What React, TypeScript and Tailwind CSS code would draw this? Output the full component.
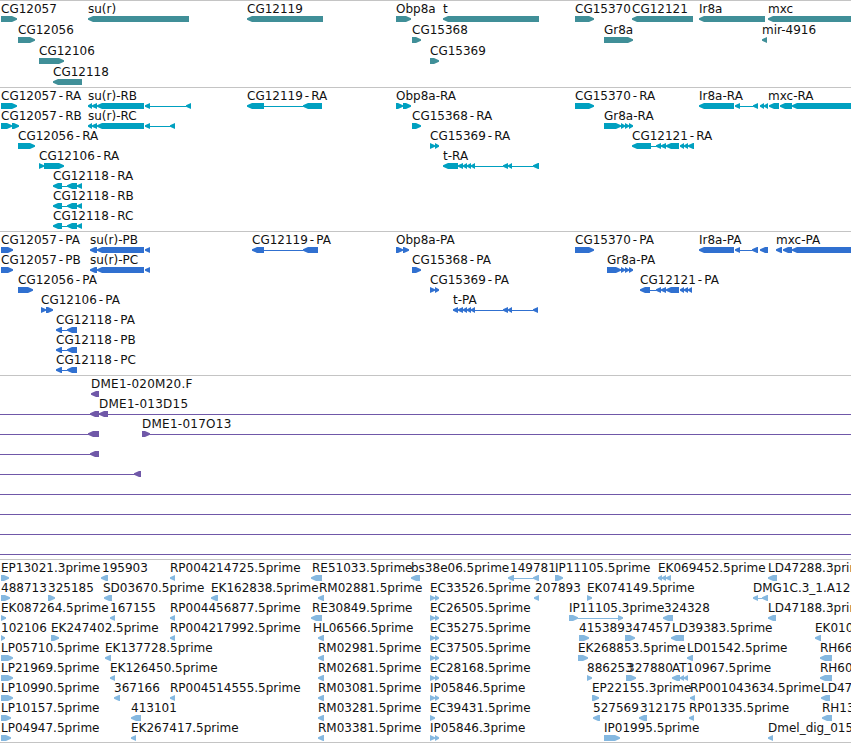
type Seg = [number, number, 'l' | 'r' | '-'];
type Item = { label?: string; x?: number; row: number; segs: Seg[] };

const L = (a: number, b: number): Seg => [a, b, 'l'];
const R = (a: number, b: number): Seg => [a, b, 'r'];
const N = (a: number, b: number): Seg => [a, b, '-'];

// one row of the 5th track has a lot of short labels, so items are kept terse
const it = (label: string, x: number, row: number, ...segs: Seg[]): Item => ({ label, x, row, segs });

const genes: Item[] = [
  it('CG12057', 1, 0, R(1, 17)),
  it('su(r)', 88, 0, L(88, 189)),
  it('CG12119', 247, 0, L(247, 323)),
  it('Obp8a', 396, 0, R(396, 411)),
  it('t', 443, 0, L(443, 539)),
  it('CG15370', 575, 0, R(575, 594)),
  it('CG12121', 632, 0, L(632, 693)),
  it('Ir8a', 699, 0, L(699, 765)),
  it('mxc', 768, 0, L(768, 860)),
  it('CG12056', 18, 1, R(18, 35)),
  it('CG15368', 412, 1, R(412, 421)),
  it('Gr8a', 604, 1, R(604, 633)),
  it('mir-4916', 762, 1, L(762, 767)),
  it('CG12106', 39, 2, R(39, 64)),
  it('CG15369', 430, 2, R(430, 439)),
  it('CG12118', 53, 3, L(53, 82)),
];

const cg12118ra = [L(53, 62), N(62, 67), L(67, 77), L(77, 82)];
const surExons = [L(88, 92), L(92, 97), L(97, 144), L(145, 150)];

const rnaA: Item[] = [
  it('CG12057-RA', 1, 0, R(1, 17)),
  it('su(r)-RB', 88, 0, ...surExons, N(150, 186), L(186, 191)),
  it('CG12119-RA', 247, 0, L(247, 264), N(264, 303), L(303, 322)),
  it('Obp8a-RA', 396, 0, R(396, 403), R(403, 411)),
  it('CG15370-RA', 575, 0, R(575, 594)),
  it('Ir8a-RA', 699, 0, L(699, 734), L(735, 740), N(740, 753), L(753, 758), L(760, 764), L(764, 768)),
  it('mxc-RA', 768, 0, L(769, 779), L(780, 792), L(792, 860)),
  it('CG12057-RB', 1, 1, R(1, 12), R(12, 19)),
  it('su(r)-RC', 88, 1, ...surExons, N(150, 170), L(170, 175)),
  it('CG15368-RA', 412, 1, R(412, 421)),
  it('Gr8a-RA', 604, 1, R(604, 621), R(621, 625), R(625, 629), R(629, 633)),
  it('CG12056-RA', 18, 2, R(18, 35)),
  it('CG15369-RA', 430, 2, R(430, 435), R(435, 439)),
  it('CG12121-RA', 632, 2, L(632, 651), N(651, 656), L(656, 661), L(661, 666), L(666, 679), L(680, 684), L(684, 688), L(688, 694)),
  it('CG12106-RA', 39, 3, R(39, 44), R(44, 64)),
  it('t-RA', 443, 3, L(443, 458), L(458, 463), L(463, 467), L(467, 471), L(471, 475), N(475, 503), L(503, 508), L(508, 512), N(512, 533), L(533, 539)),
  it('CG12118-RA', 53, 4, ...cg12118ra),
  it('CG12118-RB', 53, 5, ...cg12118ra),
  it('CG12118-RC', 53, 6, ...cg12118ra),
];

const cg12118pa = [L(56, 62), N(62, 67), L(67, 77)];
const surPb = [L(90, 97), L(97, 144), L(145, 150)];

const rnaB: Item[] = [
  it('CG12057-PA', 1, 0, R(1, 13)),
  it('su(r)-PB', 90, 0, ...surPb),
  it('CG12119-PA', 252, 0, L(252, 264), N(264, 303), L(303, 318)),
  it('Obp8a-PA', 396, 0, R(396, 403), R(403, 409)),
  it('CG15370-PA', 575, 0, R(575, 594)),
  it('Ir8a-PA', 699, 0, L(699, 734), L(735, 740), N(740, 752), L(752, 758), L(760, 768)),
  it('mxc-PA', 776, 0, L(776, 782), L(783, 792), L(792, 860)),
  it('CG12057-PB', 1, 1, R(1, 13)),
  it('su(r)-PC', 90, 1, ...surPb),
  it('CG15368-PA', 412, 1, R(412, 421)),
  it('Gr8a-PA', 607, 1, R(607, 621), R(621, 625), R(625, 629), R(629, 633)),
  it('CG12056-PA', 18, 2, R(18, 33)),
  it('CG15369-PA', 430, 2, R(430, 435), R(435, 439)),
  it('CG12121-PA', 640, 2, L(640, 650), N(650, 656), L(656, 661), L(661, 666), L(666, 679), L(680, 684), L(684, 688), L(688, 692)),
  it('CG12106-PA', 41, 3, R(41, 46), R(46, 53)),
  it('t-PA', 453, 3, L(453, 458), L(458, 463), L(463, 467), L(467, 471), L(471, 475), N(475, 503), L(503, 508), L(508, 512), N(512, 533), L(533, 538)),
  it('CG12118-PA', 56, 4, ...cg12118pa),
  it('CG12118-PB', 56, 5, ...cg12118pa),
  it('CG12118-PC', 56, 6, ...cg12118pa),
];

const clones: Item[] = [
  it('DME1-020M20.F', 91, 0, L(91, 99)),
  it('DME1-013D15', 99, 1, N(0, 851), L(90, 99), L(99, 108)),
  { row: 2, segs: [N(0, 99), L(88, 99)] },
  it('DME1-017O13', 142, 2, R(142, 150), N(150, 851)),
  { row: 3, segs: [N(0, 99), L(90, 99)] },
  { row: 4, segs: [N(0, 135), L(134, 141)] },
  { row: 5, segs: [N(0, 851)] },
  { row: 6, segs: [N(0, 851)] },
  { row: 7, segs: [N(0, 851)] },
  { row: 8, segs: [N(0, 851)] },
];

const ests: Item[] = [
  it('EP13021.3prime', 1, 0, R(1, 9)),
  it('195903', 102, 0, L(101, 108)),
  it('RP004214725.5prime', 170, 0, L(170, 175)),
  it('RE51033.5prime', 312, 0, L(311, 322)),
  it('bs38e06.5prime', 411, 0, L(411, 420)),
  it('149781', 510, 0, L(508, 514), N(514, 533), L(533, 539)),
  it('IP11105.5prime', 555, 0, R(555, 563)),
  it('EK069452.5prime', 658, 0, L(658, 662), L(662, 666), L(666, 671)),
  it('LD47288.3prime', 768, 0, L(768, 777)),

  it('488713', 1, 1, R(1, 10)),
  it('325185', 48, 1, R(48, 55)),
  it('SD03670.5prime', 103, 1, L(104, 112)),
  it('EK162838.5prime', 211, 1, L(211, 218)),
  it('RM02881.5prime', 319, 1, L(318, 324)),
  it('EC33526.5prime', 430, 1, R(430, 435), R(435, 439)),
  it('207893', 535, 1, L(534, 539)),
  it('EK074149.5prime', 587, 1, R(587, 592)),
  it('DMG1C.3_1.A12.5prime', 753, 1, L(753, 758), N(758, 762), L(762, 768)),

  it('EK087264.5prime', 1, 2, R(1, 6)),
  it('167155', 110, 2, L(110, 115)),
  it('RP004456877.5prime', 170, 2, L(170, 175)),
  it('RE30849.5prime', 312, 2, L(311, 322)),
  it('EC26505.5prime', 430, 2, R(430, 435), R(435, 439)),
  it('IP11105.3prime', 569, 2, R(569, 578), N(578, 618), R(618, 623)),
  it('324328', 664, 2, L(663, 673)),
  it('LD47188.3prime', 768, 2, L(768, 776)),

  it('102106', 1, 3, R(1, 5)),
  it('EK247402.5prime', 51, 3, R(51, 59)),
  it('RP004217992.5prime', 170, 3, L(170, 175)),
  it('HL06566.5prime', 313, 3, L(318, 324)),
  it('EC35275.5prime', 430, 3, R(430, 435), R(435, 439)),
  it('415389', 579, 3, R(579, 589)),
  it('347457', 625, 3, R(625, 635)),
  it('LD39383.5prime', 672, 3, L(671, 684)),
  it('EK010.5prime', 815, 3, L(815, 821)),

  it('LP05710.5prime', 1, 4, R(1, 13)),
  it('EK137728.5prime', 105, 4, L(105, 111)),
  it('RM02981.5prime', 318, 4, L(318, 324)),
  it('EC37505.5prime', 430, 4, R(430, 435), R(435, 439)),
  it('EK268853.5prime', 578, 4, R(578, 588)),
  it('LD01542.5prime', 687, 4, L(687, 693)),
  it('RH66.5prime', 820, 4, L(820, 832)),

  it('LP21969.5prime', 1, 5, R(1, 13)),
  it('EK126450.5prime', 110, 5, L(110, 115)),
  it('RM02681.5prime', 318, 5, L(318, 324)),
  it('EC28168.5prime', 430, 5, R(430, 435), R(435, 439)),
  it('886253', 587, 5, R(587, 592)),
  it('327880', 627, 5, R(626, 636)),
  it('AT10967.5prime', 672, 5, L(672, 680), L(680, 684), L(684, 688)),
  it('RH60.5prime', 820, 5, L(820, 832)),

  it('LP10990.5prime', 1, 6, R(1, 13)),
  it('367166', 114, 6, L(114, 120)),
  it('RP004514555.5prime', 170, 6, L(170, 175)),
  it('RM03081.5prime', 318, 6, L(318, 324)),
  it('IP05846.5prime', 430, 6, R(430, 435), R(435, 439)),
  it('EP22155.3prime', 592, 6, R(592, 599)),
  it('RP001043634.5prime', 690, 6, L(690, 695)),
  it('LD47.5prime', 821, 6, L(821, 830)),

  it('LP10157.5prime', 1, 7, R(1, 11)),
  it('413101', 131, 7, L(131, 141)),
  it('RM03281.5prime', 318, 7, L(318, 324)),
  it('EC39431.5prime', 430, 7, R(430, 435)),
  it('527569', 593, 7, L(593, 600)),
  it('312175', 640, 7, L(639, 647)),
  it('RP01335.5prime', 689, 7, L(689, 694)),
  it('RH13.5prime', 822, 7, L(822, 832)),

  it('LP04947.5prime', 1, 8, R(1, 11)),
  it('EK267417.5prime', 131, 8, L(131, 136)),
  it('RM03381.5prime', 318, 8, L(318, 324)),
  it('IP05846.3prime', 430, 8, R(430, 435), R(435, 439)),
  it('IP01995.5prime', 604, 8, R(604, 620)),
  it('Dmel_dig_015.5prime', 768, 8, L(768, 773)),
];

// exon with a narrow arrow tip, the way the browser's transcript glyph tapers
const shape = ([a, b, dir]: Seg, y: number) => {
  const h = 6;
  const tip = Math.min(5, b - a);
  if (dir === 'l') {
    return `${a},${y + 2.3} ${a + tip},${y} ${b},${y} ${b},${y + h} ${a + tip},${y + h} ${a},${y + 3.7}`;
  }
  return `${b},${y + 2.3} ${b - tip},${y} ${a},${y} ${a},${y + h} ${b - tip},${y + h} ${b},${y + 3.7}`;
};

// the CG transcript names have a wider hyphen in the original font
const Label = ({ text }: { text: string }) => {
  const m = text.match(/^(CG\d+)-(.+)$/);
  if (!m) return <>{text}</>;
  return (
    <>
      {m[1]}
      <span className="px-[2px]">-</span>
      {m[2]}
    </>
  );
};

interface TrackProps {
  items: Item[];
  height: string;
  color: string;
  first: number;
  step: number;
  labelClass?: string;
}

const Track = ({ items, height, color, first, step, labelClass }: TrackProps) => (
  <div className={`relative overflow-hidden border-t border-[#c4c4c4] ${height} ${color}`}>
    <svg className="absolute left-0 top-0 h-full w-full">
      {items.map((item, i) =>
        item.segs.map((seg, j) => {
          const y = first + item.row * step;
          return seg[2] === '-' ? (
            <rect key={`${i}-${j}`} x={seg[0]} y={y + 3} width={seg[1] - seg[0]} height={1} fill="currentColor" />
          ) : (
            <polygon key={`${i}-${j}`} points={shape(seg, y)} fill="currentColor" />
          );
        })
      )}
    </svg>
    {items.map((item, i) =>
      item.label ? (
        <span
          key={i}
          className={`absolute whitespace-pre font-[DejaVu_Sans,sans-serif] text-[12px] leading-[14px] text-[#111] ${labelClass ?? ''}`}
          style={{ left: item.x, top: first + item.row * step - 14 }}
        >
          <Label text={item.label} />
        </span>
      ) : null
    )}
  </div>
);

export default function App() {
  return (
    <div className="h-[743px] w-[851px] overflow-hidden bg-white">
      <Track items={genes} height="h-[87px]" color="text-[#408f98]" first={15} step={21} />
      <Track items={rnaA} height="h-[144px]" color="text-[#00a0c0]" first={15} step={20} />
      <Track items={rnaB} height="h-[144px]" color="text-[#3070d0]" first={15} step={20} />
      <Track items={clones} height="h-[184px]" color="text-[#7058a8]" first={15} step={20} labelClass="tracking-[0.25px]" />
      <Track items={ests} height="h-[183px]" color="text-[#85b8e0]" first={15} step={20} />
      <div className="border-t border-[#c4c4c4]" />
    </div>
  );
}
